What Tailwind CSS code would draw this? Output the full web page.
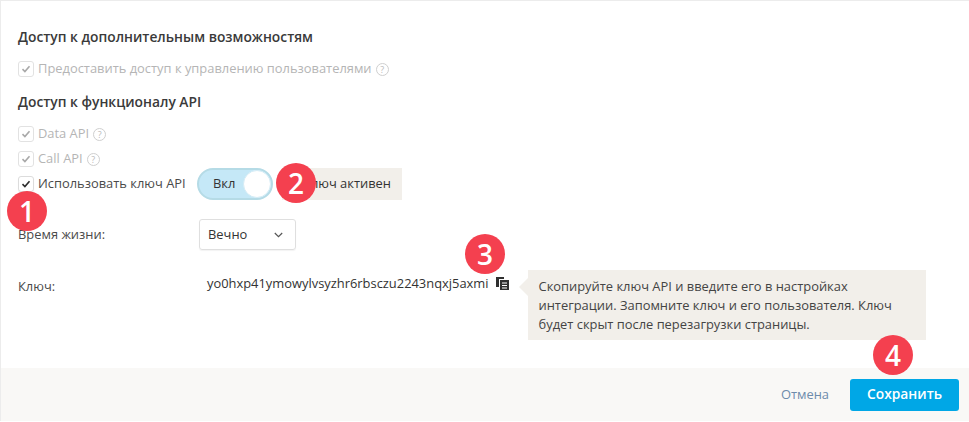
<!DOCTYPE html>
<html lang="en">
<head>
    <meta charset="UTF-8">
    <title>Ключ API</title>
    <script src="https://cdn.jsdelivr.net/npm/@tailwindcss/browser@4"></script>
</head>
<body class="bg-white font-['Open_Sans',sans-serif] text-[12.9px] text-[#4a4a4a]">
    <div class="relative h-[422px] w-[969px] overflow-hidden">
        <div class="flex h-[421px] flex-col border-t border-l border-[#ececec]">
            <!-- Form -->
            <div class="h-[367px] pl-[17px] pt-[27px]">
                <h3 class="text-[13.8px] leading-[18px] font-semibold text-[#3a3a3a]">Доступ к дополнительным возможностям</h3>
                <div class="mt-[14px] flex h-[18px] items-center text-[#b5b5b5]">
                    <span class="flex h-[16px] w-[16px] items-center justify-center rounded-[3px] border border-[#e2e2e2]">
                        <svg width="10" height="8" viewBox="0 0 9 8" fill="none" stroke="#a8a8a8" stroke-width="1.6"><path d="M1 4.2l2.4 2.3L8 1.2"/></svg>
                    </span>
                    <span class="ml-1">Предоставить доступ к управлению пользователями</span>
                    <span class="ml-1 flex h-[13px] w-[13px] items-center justify-center rounded-full border border-[#cfcfcf] text-[9px] leading-none text-[#bbb]">?</span>
                </div>
                <h3 class="mt-[15px] text-[13.8px] leading-[18px] font-semibold text-[#3a3a3a]">Доступ к функционалу API</h3>
                <div class="mt-[14px] flex h-[18px] items-center text-[#b5b5b5]">
                    <span class="flex h-[16px] w-[16px] items-center justify-center rounded-[3px] border border-[#e2e2e2]">
                        <svg width="10" height="8" viewBox="0 0 9 8" fill="none" stroke="#a8a8a8" stroke-width="1.6"><path d="M1 4.2l2.4 2.3L8 1.2"/></svg>
                    </span>
                    <span class="ml-1">Data API</span>
                    <span class="ml-1 flex h-[13px] w-[13px] items-center justify-center rounded-full border border-[#cfcfcf] text-[9px] leading-none text-[#bbb]">?</span>
                </div>
                <div class="mt-[7px] flex h-[18px] items-center text-[#b5b5b5]">
                    <span class="flex h-[16px] w-[16px] items-center justify-center rounded-[3px] border border-[#e2e2e2]">
                        <svg width="10" height="8" viewBox="0 0 9 8" fill="none" stroke="#a8a8a8" stroke-width="1.6"><path d="M1 4.2l2.4 2.3L8 1.2"/></svg>
                    </span>
                    <span class="ml-1">Call API</span>
                    <span class="ml-1 flex h-[13px] w-[13px] items-center justify-center rounded-full border border-[#cfcfcf] text-[9px] leading-none text-[#bbb]">?</span>
                </div>
                <div class="flex h-[32px] items-center">
                    <span class="flex h-[16px] w-[16px] items-center justify-center rounded-[3px] border border-[#dcdcdc] shadow-[0_1px_1px_rgba(0,0,0,0.06)]">
                        <svg width="10" height="8" viewBox="0 0 9 8" fill="none" stroke="#2b2b2b" stroke-width="1.6"><path d="M1 4.2l2.4 2.3L8 1.2"/></svg>
                    </span>
                    <span class="ml-1 w-[159px]">Использовать ключ API</span>
                    <div class="flex h-[32px] w-[76px] items-center justify-between rounded-full border-2 border-[#b5dbe6] bg-[#c5e8f7] pl-[14px] text-[#333]">
                        Вкл
                        <span class="h-[28px] w-[28px] rounded-full border border-[#d5ecf5] bg-white"></span>
                    </div>
                    <div class="ml-[9px] flex h-[32px] w-[120px] items-center justify-end bg-[#f2efea] pr-[11px] text-[#333]">Ключ активен</div>
                </div>
                <div class="mt-[19px] flex items-center">
                    <span class="w-[181px]">Время жизни:</span>
                    <div class="flex h-[31px] w-[97px] items-center justify-between rounded-[3px] border border-[#dfdfdf] pr-[12px] pl-[8px] text-[#333] shadow-[0_1px_1px_rgba(0,0,0,0.05)]">
                        Вечно
                        <svg width="9" height="6" viewBox="0 0 9 6" fill="none" stroke="#555" stroke-width="1.2"><path d="M.8 1l3.7 3.6L8.2 1"/></svg>
                    </div>
                </div>
                <div class="mt-[20px] flex items-start">
                    <span class="mt-[7px] w-[189px]">Ключ:</span>
                    <span class="mt-[4px] text-[#333]">yo0hxp41ymowylvsyzhr6rbsczu2243nqxj5axmi</span>
                    <svg class="mt-[6px] ml-[6px] shrink-0" width="15" height="15" viewBox="0 0 15 15" fill="#2f2f2f"><path d="M1 1h8v2H4v8H1z"/><path fill-rule="evenodd" d="M5 4h9v10H5zM7 6.5v1h5v-1zM7 9v1h5V9zM7 11.5v1h5v-1z"/></svg>
                    <div class="relative ml-[18px] h-[70px] w-[398px] shrink-0 bg-[#f2efea] px-[11px] pt-[7px] leading-[19px] text-[#444]">
                        <span class="absolute top-[8px] left-[-9px] h-0 w-0 border-y-[9px] border-r-[9px] border-y-transparent border-r-[#f2efea]"></span>
                        Скопируйте ключ API и введите его в настройках интеграции. Запомните ключ и его пользователя. Ключ будет скрыт после перезагрузки страницы.
                    </div>
                </div>
            </div>
            <!-- Footer -->
            <div class="flex flex-1 items-center justify-end gap-[21px] bg-[#f9f8f6] pr-[10px]">
                <a class="text-[#6d8bab]">Отмена</a>
                <button class="h-[32px] w-[109px] rounded-[3px] bg-[#00a7e6] text-[13.8px] font-semibold text-white">Сохранить</button>
            </div>
        </div>
        <!-- Callout numbers -->
        <span class="absolute top-[191px] left-[7px] flex h-[40px] w-[40px] items-center justify-center rounded-full bg-[#f4404f] text-[28px] font-semibold text-white">1</span>
        <span class="absolute top-[163px] left-[276px] flex h-[40px] w-[40px] items-center justify-center rounded-full bg-[#f4404f] text-[28px] font-semibold text-white">2</span>
        <span class="absolute top-[234px] left-[465px] flex h-[40px] w-[40px] items-center justify-center rounded-full bg-[#f4404f] text-[28px] font-semibold text-white">3</span>
        <span class="absolute top-[335px] left-[873px] flex h-[40px] w-[40px] items-center justify-center rounded-full bg-[#f4404f] text-[28px] font-semibold text-white">4</span>
    </div>
</body>
</html>
